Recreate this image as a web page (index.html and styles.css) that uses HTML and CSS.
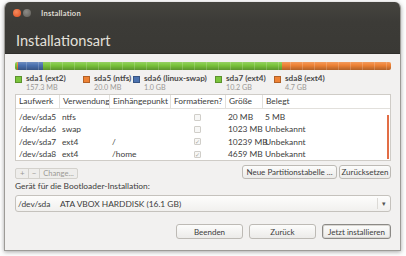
FILE: index.html
```html
<!DOCTYPE html>
<html lang="de">
<head>
   <meta charset="UTF-8">
   <title>Installation</title>
   <link rel="stylesheet" href="styles.css">
</head>
<body>
   <div class="window">
       <div class="header">
           <div class="titlebar">
               <span class="wbtn close"></span>
               <span class="wbtn minimize"></span>
               <span class="title">Installation</span>
           </div>
           <h1>Installationsart</h1>
       </div>

       <div class="content">
           <div class="partbar">
               <span class="seg green" style="width:2px"></span>
               <span class="seg orange" style="width:1px"></span>
               <span class="seg blue" style="width:25px"></span>
               <span class="seg green" style="width:239px"></span>
               <span class="seg orange" style="flex:1"></span>
           </div>

           <div class="legend">
               <div class="item">
                   <span class="swatch green"></span>
                   <div><div class="name">sda1 (ext2)</div><div class="size">157.3 MB</div></div>
               </div>
               <div class="item">
                   <span class="swatch orange"></span>
                   <div><div class="name">sda5 (ntfs)</div><div class="size">20.0 MB</div></div>
               </div>
               <div class="item">
                   <span class="swatch blue"></span>
                   <div><div class="name">sda6 (linux-swap)</div><div class="size">1.0 GB</div></div>
               </div>
               <div class="item">
                   <span class="swatch green"></span>
                   <div><div class="name">sda7 (ext4)</div><div class="size">10.2 GB</div></div>
               </div>
               <div class="item">
                   <span class="swatch orange"></span>
                   <div><div class="name">sda8 (ext4)</div><div class="size">4.7 GB</div></div>
               </div>
           </div>

           <div class="table">
               <div class="thead">
                   <span>Laufwerk</span>
                   <span>Verwendung</span>
                   <span>Einhängepunkt</span>
                   <span>Formatieren?</span>
                   <span>Größe</span>
                   <span>Belegt</span>
               </div>
               <div class="tbody">
                   <div class="trow">
                       <span>/dev/sda5</span><span>ntfs</span><span></span>
                       <span class="check"><i class="box"></i></span>
                       <span>20 MB</span><span>5 MB</span>
                   </div>
                   <div class="trow">
                       <span>/dev/sda6</span><span>swap</span><span></span>
                       <span class="check"><i class="box"></i></span>
                       <span>1023 MB</span><span>Unbekannt</span>
                   </div>
                   <div class="trow">
                       <span>/dev/sda7</span><span>ext4</span><span>/</span>
                       <span class="check"><i class="box on">✓</i></span>
                       <span>10239 MB</span><span>Unbekannt</span>
                   </div>
                   <div class="trow">
                       <span>/dev/sda8</span><span>ext4</span><span>/home</span>
                       <span class="check"><i class="box on">✓</i></span>
                       <span>4659 MB</span><span>Unbekannt</span>
                   </div>
               </div>
               <div class="scrollbar"></div>
           </div>

           <div class="toolbar">
               <div class="editgroup">
                   <span class="gbtn">+</span>
                   <span class="gbtn">−</span>
                   <span class="gbtn change">Change...</span>
               </div>
               <div class="spacer"></div>
               <button class="btn newtable">Neue Partitionstabelle ...</button>
               <button class="btn reset">Zurücksetzen</button>
           </div>

           <label class="bootlabel">Gerät für die Bootloader-Installation:</label>
           <div class="combo">
               <span class="dev">/dev/sda</span>
               <span class="disk">ATA VBOX HARDDISK (16.1 GB)</span>
               <span class="arrow">▾</span>
           </div>

           <div class="actions">
               <button class="btn action">Beenden</button>
               <button class="btn action">Zurück</button>
               <button class="btn action default">Jetzt installieren</button>
           </div>
       </div>
   </div>
</body>
</html>
```

FILE: styles.css
```css
* { margin: 0; padding: 0; box-sizing: border-box; }
html, body {
    width: 406px; height: 256px; overflow: hidden;
    background: #fdfdfd;
    font-family: 'Lato', 'Open Sans', sans-serif;
    color: #3c3c3c;
}
body { padding: 2px 5px 0 4px; }
.window {
    width: 397px; height: 249px;
    background: #f2f1f0;
    border: 1px solid #9d9b97;
    border-top: none;
    border-radius: 6px 6px 0 0;
    box-shadow: 0 1px 4px rgba(0, 0, 0, 0.35);
    display: flex; flex-direction: column;
    overflow: hidden;
}
.header {
    height: 52px;
    background: linear-gradient(#45443f, #3c3b37 40%, #3a3935);
    border-bottom: 1px solid #2f2e2b;
    padding: 6px 0 0 8px;
}
.titlebar { display: flex; align-items: center; height: 9px; }
.wbtn {
    width: 8px; height: 8px; border-radius: 50%;
    margin-right: 2px;
}
.wbtn.close { background: radial-gradient(circle at 40% 35%, #f58a5c, #df4d1f); }
.wbtn.minimize { background: radial-gradient(circle at 40% 35%, #8d8b86, #5d5c57); }
.title {
    margin-left: 8px;
    font-size: 7.6px; font-weight: 700;
    color: #dfdbd2; letter-spacing: 0.2px;
}
h1 {
    margin-top: 15px; margin-left: 3px;
    font-size: 14.6px; font-weight: 400;
    color: #e3e0da;
}
.content {
    flex: 1;
    padding: 8px 9px 0 10px;
    display: flex; flex-direction: column;
    font-size: 8.4px;
}
.partbar {
    display: flex; height: 8px; flex: none;
    border-radius: 2px; overflow: hidden;
    position: relative;
}
.partbar::after {
    content: ""; position: absolute; inset: 0;
    background:
        repeating-linear-gradient(90deg, transparent 0 11px, rgba(255, 255, 255, 0.18) 11px 12px),
        linear-gradient(rgba(255, 255, 255, 0.2), transparent 40%, rgba(0, 0, 0, 0.25));
}
.seg { display: block; height: 100%; }
.green { background: #7bc53c; }
.orange { background: #ee8235; }
.blue { background: #4b72b0; }
.legend {
    display: grid;
    grid-template-columns: 68px 50px 82px 59px auto;
    margin-top: 3px; height: 19px; flex: none;
}
.item { display: flex; gap: 4px; }
.swatch {
    width: 7px; height: 7px; margin-top: 3px;
    border: 1px solid rgba(0, 0, 0, 0.25);
}
.name { font-weight: 700; color: #4a4a4a; font-size: 8.2px; line-height: 11px; }
.size { color: #9a9895; font-size: 7.2px; line-height: 8px; }
.table {
    position: relative; flex: none;
    margin-top: 2px; height: 67px;
    background: #fff;
    border: 1px solid #cfccc7;
}
.thead, .trow {
    display: grid;
    grid-template-columns: 43px 50px 61px 55px 37px 1fr;
}
.thead {
    height: 14px; line-height: 13px;
    border-bottom: 1px solid #e2e0dc;
}
.thead span {
    padding-left: 3px; white-space: nowrap;
    border-left: 1px solid #e2e0dc;
}
.thead span:first-child { border-left: none; padding-left: 3px; }
.tbody { padding-top: 2px; }
.trow { height: 12.3px; line-height: 12.3px; }
.trow span { padding-left: 3px; white-space: nowrap; }
.check { display: flex; align-items: center; justify-content: center; padding-left: 0 !important; }
.box {
    width: 7px; height: 7px;
    border: 1px solid #d0cec9; border-radius: 1px;
    background: #f7f7f6;
    font-style: normal; font-size: 6px; line-height: 5px;
    color: #a9a7a3; text-align: center;
}
.scrollbar {
    position: absolute; right: 1px; top: 20px; bottom: 1px;
    width: 2px; background: #e26d45;
}
.toolbar {
    display: flex; align-items: flex-start; flex: none;
    margin-top: 4px; height: 14px;
}
.editgroup {
    display: flex; height: 11px; margin-top: 3px;
    border: 1px solid #d3d1cc; border-radius: 2px;
    background: #eeedeb;
    color: #9b9994;
}
.gbtn {
    padding: 0 3px; line-height: 9px;
    border-left: 1px solid #d3d1cc;
    font-size: 8px;
}
.gbtn:first-child { border-left: none; padding: 0 3px 0 4px; }
.gbtn.change { font-size: 7.6px; padding: 0 3px; }
.spacer { flex: 1; }
.btn {
    font-family: inherit; font-size: 8px; color: #3c3c3c;
    background: linear-gradient(#fcfcfb, #ecebe9);
    border: 1px solid #bdbab5; border-radius: 3px;
    height: 14px; line-height: 12px;
    padding: 0; white-space: nowrap;
}
.newtable { width: 95px; }
.reset { width: 52px; margin-left: 2px; }
.bootlabel { margin-top: 1px; line-height: 12px; }
.combo {
    display: flex; align-items: center; flex: none;
    height: 17px; margin-top: 3px;
    background: linear-gradient(#fdfdfc, #f1f0ee);
    border: 1px solid #c5c2bd; border-radius: 3px;
    padding-left: 2px;
}
.dev { width: 42px; }
.disk { flex: 1; }
.arrow {
    width: 13px; height: 11px;
    border-left: 1px solid #dcdad6;
    font-size: 7px; line-height: 11px; text-align: center;
    color: #555;
}
.actions {
    display: flex; justify-content: flex-end; gap: 6px;
    margin-top: 12px;
}
.action { width: 67px; height: 15px; }
.action.default { width: 69px; border-color: #8c8a86; box-shadow: inset 0 0 0 1px #d9d7d3; }
```
